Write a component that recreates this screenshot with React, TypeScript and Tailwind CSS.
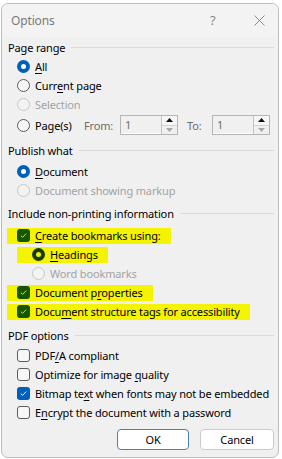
import type { ReactNode } from 'react';

const HL = 'bg-[#f4f400]';

const Radio = ({ checked, disabled, marked }: { checked?: boolean; disabled?: boolean; marked?: boolean }) => {
  if (marked) {
    return (
      <span className="w-[13px] h-[13px] rounded-full bg-[#183c00] flex items-center justify-center shrink-0">
        <span className="w-[5px] h-[5px] rounded-full bg-[#f4f400]" />
      </span>
    );
  }
  if (checked) {
    return (
      <span className="w-[13px] h-[13px] rounded-full bg-[#005fb8] flex items-center justify-center shrink-0">
        <span className="w-[5px] h-[5px] rounded-full bg-white" />
      </span>
    );
  }
  return (
    <span
      className={
        'w-[13px] h-[13px] rounded-full border shrink-0 ' +
        (disabled ? 'border-[#c6c6c6] bg-[#f3f3f3]' : 'border-[#5d5d5d] bg-[#f7f7f7]')
      }
    />
  );
};

const Check = ({ checked, marked }: { checked?: boolean; marked?: boolean }) => {
  if (checked || marked) {
    return (
      <span
        className={
          'w-[13px] h-[13px] rounded-[3px] flex items-center justify-center shrink-0 ' +
          (marked ? 'bg-[#165600]' : 'bg-[#005fb8]')
        }
      >
        <svg width="9" height="9" viewBox="0 0 9 9">
          <path d="M1.8 4.6 L3.6 6.3 L7.2 2.6" fill="none" stroke={marked ? '#c6ee2a' : '#ffffff'} strokeWidth="1" />
        </svg>
      </span>
    );
  }
  return <span className="w-[13px] h-[13px] rounded-[3px] border border-[#5d5d5d] bg-[#f7f7f7] shrink-0" />;
};

const U = ({ children }: { children: ReactNode }) => <span className="underline underline-offset-2">{children}</span>;

const Group = ({ label }: { label: string }) => (
  <div className="h-[20px] flex items-center pl-[6px] pr-[4px] gap-[6px]">
    <span className="text-black">{label}</span>
    <span className="flex-1 h-px bg-[#dadada]" />
  </div>
);

const Item = ({ control, children, disabled, indent = 15 }: { control: ReactNode; children: ReactNode; disabled?: boolean; indent?: number }) => (
  <div
    className={'h-[19px] flex items-center gap-[5px] ' + (indent === 30 ? 'pl-[30px] ' : 'pl-[15px] ') + (disabled ? 'text-[#a3a3a3]' : 'text-black')}
  >
    {control}
    <span>{children}</span>
  </div>
);

const Marked = ({ control, children, wide }: { control: ReactNode; children: ReactNode; wide?: boolean }) => (
  <div className={'h-[19px] flex items-center ' + (wide ? 'pl-[15px]' : 'pl-[5px]')}>
    <div className={'h-[16px] flex items-center gap-[5px] pr-[10px] ' + HL + (wide ? ' pl-[15px]' : ' pl-[10px]')}>
      {control}
      <span className="text-black">{children}</span>
    </div>
  </div>
);

const Spinner = () => (
  <div className="w-[58px] h-[20px] border border-[#b5b5b5] flex bg-[#f0f0f0]">
    <div className="flex-1 flex items-center pl-[4px] text-[#6d6d6d] border-b border-white">1</div>
    <div className="w-[16px] flex flex-col border-l border-[#c4c4c4]">
      <div className="flex-1 flex items-center justify-center border-b border-[#d2d2d2] bg-[#f6f6f6]">
        <svg width="7" height="4" viewBox="0 0 7 4">
          <path d="M0 4 L3.5 0 L7 4 Z" fill="#111" />
        </svg>
      </div>
      <div className="flex-1 flex items-center justify-center">
        <svg width="7" height="4" viewBox="0 0 7 4">
          <path d="M0 0 L3.5 4 L7 0 Z" fill="#a8a8a8" />
        </svg>
      </div>
    </div>
  </div>
);

export default function App() {
  return (
    <div
      className="w-[282px] h-[459px] bg-white pt-[3px] pl-[1px] pr-[3px] overflow-hidden text-[11px] tracking-[-0.15px] leading-none whitespace-nowrap"
      style={{ fontFamily: '"Noto Sans", "DejaVu Sans", sans-serif' }}
    >
      <div className="h-[455px] rounded-[7px] border border-[#bdbdbd] bg-[#f0f0f0] overflow-hidden">
        <div className="h-[33px] bg-[#f3f3f3] flex items-center pl-[9px] text-[#7a7a7a]">
          <span className="flex-1 text-[12px]">Options</span>
          <span className="w-[10px] text-[13px] text-[#8a8a8a] mr-[34px]">?</span>
          <svg width="11" height="11" viewBox="0 0 11 11" className="mr-[13px]">
            <path d="M0.5 0.5 L10.5 10.5 M10.5 0.5 L0.5 10.5" stroke="#8a8a8a" strokeWidth="1" />
          </svg>
        </div>

        <Group label="Page range" />
        <Item control={<Radio checked />}><U>A</U>ll</Item>
        <Item control={<Radio />}>Curr<U>e</U>nt page</Item>
        <Item control={<Radio disabled />} disabled>Selection</Item>
        <div className="h-[22px] flex items-center pl-[15px] text-black">
          <Radio />
          <span className="ml-[5px] w-[49px]">Pa<U>g</U>e(s)</span>
          <span className="text-[#6d6d6d] w-[36px]">From:</span>
          <Spinner />
          <span className="text-[#6d6d6d] ml-[9px] w-[25px]">To:</span>
          <Spinner />
        </div>

        <div className="h-[4px]" />
        <Group label="Publish what" />
        <div className="h-[2px]" />
        <Item control={<Radio checked />}><U>D</U>ocument</Item>
        <Item control={<Radio disabled />} disabled>Document showing markup</Item>

        <div className="h-[3px]" />
        <Group label="Include non-printing information" />
        <div className="h-[3px]" />
        <Marked control={<Check marked />}><U>C</U>reate bookmarks using:</Marked>
        <Marked wide control={<Radio marked />}><U>H</U>eadings</Marked>
        <Item indent={30} control={<Radio disabled />} disabled>Word bookmarks</Item>
        <Marked control={<Check marked />}>Document p<U>r</U>operties</Marked>
        <Marked control={<Check marked />}>Docu<U>m</U>ent structure tags for accessibility</Marked>

        <div className="h-[4px]" />
        <Group label="PDF options" />
        <div className="h-[1px]" />
        <Item control={<Check />}>PDF<U>/</U>A compliant</Item>
        <Item control={<Check />}>Optimize for image <U>q</U>uality</Item>
        <Item control={<Check checked />}>Bitmap te<U>x</U>t when fonts may not be embedded</Item>
        <Item control={<Check />}>E<U>n</U>crypt the document with a password</Item>

        <div className="flex justify-end gap-[11px] pr-[4px] mt-[7px]">
          <button className="w-[72px] h-[21px] rounded-[4px] border border-[#4f7fae] bg-white text-black">OK</button>
          <button className="w-[74px] h-[21px] rounded-[4px] border border-[#cacaca] bg-white text-black">Cancel</button>
        </div>
      </div>
    </div>
  );
}
